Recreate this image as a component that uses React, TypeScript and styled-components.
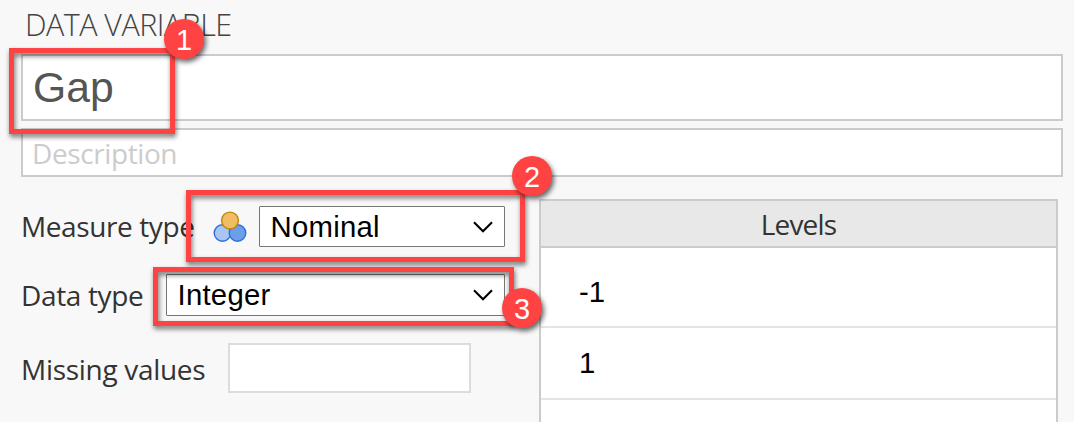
import React from 'react';
import styled, { createGlobalStyle } from 'styled-components';

const Global = createGlobalStyle`
  * { box-sizing: border-box; }
  html, body { margin: 0; background: #f8f8f8; overflow: hidden; }
`;

const humanist = `'Open Sans', 'Noto Sans', sans-serif`;
const grotesque = `'Liberation Sans', Arial, sans-serif`;

const Panel = styled.main`
  position: relative;
  width: 1074px;
  height: 422px;
  overflow: hidden;
  padding: 0 11px 0 21px;
  background: #f8f8f8;
  color: #333;
  font-family: ${humanist};
  display: flex;
  flex-direction: column;

  > * { flex-shrink: 0; }
`;

const Heading = styled.h1`
  margin: 0;
  height: 54px;
  padding: 3px 0 0 4px;
  font-size: 30.5px;
  line-height: 42px;
  font-weight: 300;
  letter-spacing: -0.55px;
  color: #444;
`;

const NameField = styled.div`
  height: 67px;
  border: 2px solid #cbcbcb;
  background: #fff;
  padding: 0 10px;
  font: 42.67px/62px ${grotesque};
  color: #555;
`;

const DescriptionField = styled.div`
  height: 49px;
  margin-top: 7px;
  border: 2px solid #cbcbcb;
  background: #fff;
  padding: 0 9px;
  font-size: 28px;
  line-height: 47px;
  letter-spacing: -0.4px;
  color: #ccc;
`;

const Body = styled.div`
  display: flex;
  align-items: flex-start;
  justify-content: space-between;
  padding-right: 5px;
`;

const Form = styled.div`
  width: 484px;
  padding-top: 29px;
  display: flex;
  flex-direction: column;
`;

const Row = styled.div<{ $gap: number }>`
  display: flex;
  align-items: center;
  margin-bottom: ${(p) => p.$gap}px;
`;

const Label = styled.span<{ $width: number; $spacing: number; $line?: number }>`
  width: ${(p) => p.$width}px;
  height: 40px;
  flex: none;
  white-space: nowrap;
  font-size: 28px;
  line-height: ${(p) => p.$line ?? 40}px;
  letter-spacing: ${(p) => p.$spacing}px;
`;

const SelectBox = styled.div<{ $height: number }>`
  flex: 1;
  height: ${(p) => p.$height}px;
  border: 1px solid #767676;
  border-radius: 1px;
  background: #fff;
  color: #000;
  display: flex;
  align-items: center;
  justify-content: space-between;
  padding: 0 11px 0 10.5px;
  font: 29.33px/40px ${grotesque};
  letter-spacing: 0.25px;
`;

const MissingInput = styled.div`
  width: 243px;
  height: 50px;
  border: 2px solid #dcdcdc;
  background: #fff;
`;

const NominalIcon = styled.svg`
  width: 34px;
  height: 32px;
  margin-right: 12px;
  flex: none;
`;

const Table = styled.div`
  width: 519px;
  height: 240px;
  margin-top: 22px;
  border: 2px solid #cbcbcb;
  background: #fff;
`;

const TableHead = styled.div`
  height: 47px;
  border-bottom: 2px solid #cbcbcb;
  background: #e8e8e8;
  text-align: center;
  font-size: 28px;
  line-height: 47px;
  letter-spacing: -0.8px;
`;

const Level = styled.div<{ $height: number; $line: number }>`
  height: ${(p) => p.$height}px;
  border-bottom: 2px solid #e4e4e4;
  padding-left: 38px;
  color: #000;
  font: 29.33px/${(p) => p.$line}px ${grotesque};
`;

const Highlight = styled.div<{ $x: number; $y: number; $w: number; $h: number }>`
  position: absolute;
  left: ${(p) => p.$x}px;
  top: ${(p) => p.$y}px;
  width: ${(p) => p.$w}px;
  height: ${(p) => p.$h}px;
  border: 5px solid #ff4343;
  filter: drop-shadow(1px 3px 2.5px rgba(0, 0, 0, 0.55));
`;

const Badge = styled.div<{ $x: number; $y: number }>`
  position: absolute;
  left: ${(p) => p.$x}px;
  top: ${(p) => p.$y}px;
  width: 40px;
  height: 40px;
  border-radius: 50%;
  background: #ff4343;
  color: #fff;
  text-align: center;
  font: 29px/42px ${grotesque};
  box-shadow: 2px 3px 5px rgba(0, 0, 0, 0.6);
`;

const Chevron = () => (
  <svg width="20" height="12" viewBox="0 0 20 12" fill="none" stroke="#000" strokeWidth="2.1">
    <path d="M1 1.3 10 10.3 19 1.3" />
  </svg>
);

export default function App() {
  return (
    <>
      <Global />
      <Panel>
        <Heading>DATA VARIABLE</Heading>
        <NameField>Gap</NameField>
        <DescriptionField>Description</DescriptionField>
        <Body>
          <Form>
            <Row $gap={27}>
              <Label $width={192} $spacing={-0.4} $line={38}>Measure type</Label>
              <NominalIcon viewBox="0 0 34 32" strokeWidth="1.4">
                <circle cx="9.5" cy="22" r="8.3" fill="#a9c6f2" stroke="#2a71dc" />
                <circle cx="24.5" cy="22" r="8.3" fill="#6c9eea" stroke="#2a71dc" />
                <circle cx="17" cy="9.5" r="8.4" fill="#f0bd62" stroke="#c2860f" />
              </NominalIcon>
              <SelectBox $height={41}>Nominal<Chevron /></SelectBox>
            </Row>
            <Row $gap={27}>
              <Label $width={145} $spacing={-0.35}>Data type</Label>
              <SelectBox $height={42}>Integer<Chevron /></SelectBox>
            </Row>
            <Row $gap={0}>
              <Label $width={207} $spacing={-0.3} $line={42}>Missing values</Label>
              <MissingInput />
            </Row>
          </Form>
          <Table>
            <TableHead>Levels</TableHead>
            <Level $height={80} $line={88}>-1</Level>
            <Level $height={72} $line={70}>1</Level>
          </Table>
        </Body>
        <Highlight $x={9} $y={48} $w={166} $h={86} />
        <Highlight $x={186} $y={190} $w={339} $h={72} />
        <Highlight $x={153} $y={267} $w={361} $h={59} />
        <Badge $x={164} $y={19}>1</Badge>
        <Badge $x={512} $y={156}>2</Badge>
        <Badge $x={502} $y={288}>3</Badge>
      </Panel>
    </>
  );
}
